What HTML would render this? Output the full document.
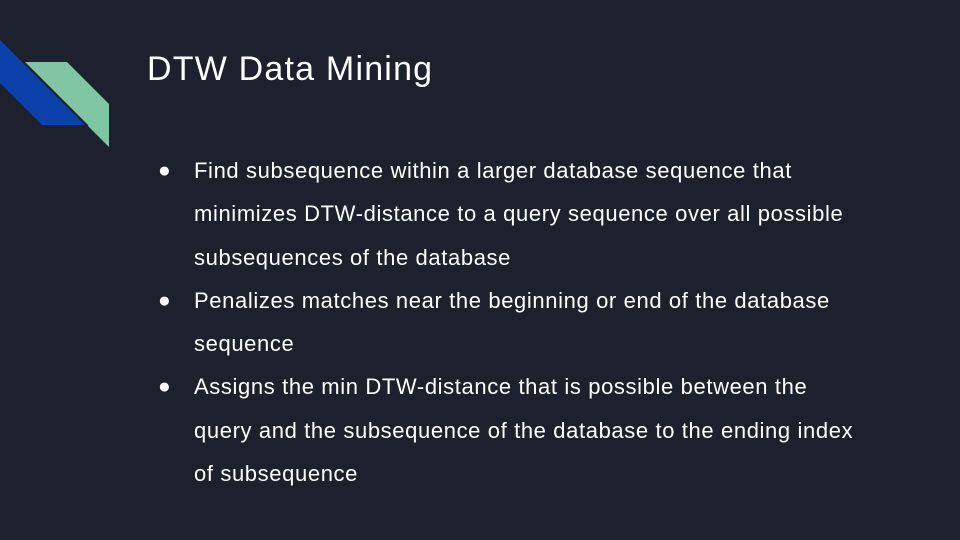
<html><head><style>
body{margin:0;width:960px;height:540px;background:#1c212d;overflow:hidden;position:relative;font-family:"Liberation Sans",sans-serif;}
h1{position:absolute;left:147px;top:50px;margin:0;font-weight:normal;font-size:34px;letter-spacing:1.2px;color:#fff;}
ul{position:absolute;left:160px;top:149px;margin:0;padding:0;list-style:none;width:800px;}
li{position:relative;padding-left:34px;color:#fff;font-size:22px;line-height:43.3px;letter-spacing:0.62px;white-space:nowrap;}
li:before{content:"●";position:absolute;left:-2px;font-size:21px;}
</style></head><body>
<svg width="120" height="160" style="position:absolute;left:0;top:0">
<polygon points="0,40 85,125 42,125 0,83" fill="#0c40aa"/>
<polygon points="24,62 67,62 109,104 109,147" fill="#80c6a2"/>
<line x1="24" y1="62" x2="88" y2="126" stroke="#1c212d" stroke-width="1.5"/>
</svg>
<h1>DTW Data Mining</h1>
<ul>
<li>Find subsequence within a larger database sequence that<br>minimizes DTW-distance to a query sequence over all possible<br>subsequences of the database</li>
<li>Penalizes matches near the beginning or end of the database<br>sequence</li>
<li>Assigns the min DTW-distance that is possible between the<br>query and the subsequence of the database to the ending index<br>of subsequence</li>
</ul>
</body></html>
